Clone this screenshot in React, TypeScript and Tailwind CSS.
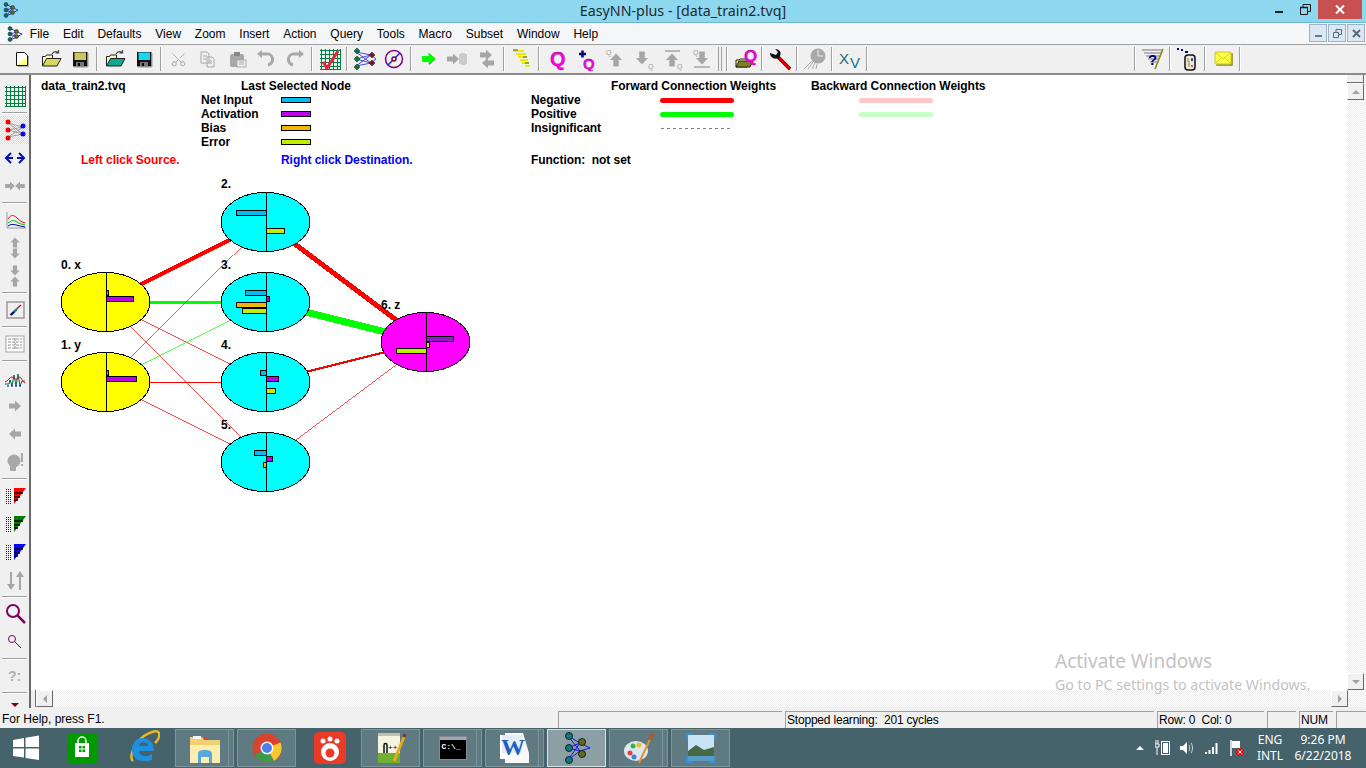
import type { ReactNode } from 'react';
import { Scissors } from 'lucide-react';

const bars = { input: '#00bcf0', act: '#c000f0', bias: '#f0b800', err: '#c0f000' };

const nodes = [
  { id: 0, cx: 105.5, cy: 302, fill: '#ffff00', label: '0. x', lx: 61, ly: 269 },
  { id: 1, cx: 105.5, cy: 382, fill: '#ffff00', label: '1. y', lx: 61, ly: 349 },
  { id: 2, cx: 265.5, cy: 222, fill: '#00ffff', label: '2.', lx: 221, ly: 188 },
  { id: 3, cx: 265.5, cy: 302, fill: '#00ffff', label: '3.', lx: 221, ly: 269 },
  { id: 4, cx: 265.5, cy: 382, fill: '#00ffff', label: '4.', lx: 221, ly: 349 },
  { id: 5, cx: 265.5, cy: 462, fill: '#00ffff', label: '5.', lx: 221, ly: 429 },
  { id: 6, cx: 425.5, cy: 342, fill: '#ff00ff', label: '6. z', lx: 381, ly: 309 },
];

const links = [
  [0, 2, '#ff0000', 4],
  [0, 3, '#00ff00', 3],
  [0, 4, '#ff0000', 0.7],
  [0, 5, '#ff0000', 0.7],
  [1, 2, '#ff0000', 0.7],
  [1, 3, '#00ff00', 0.7],
  [1, 4, '#ff0000', 1],
  [1, 5, '#ff0000', 0.7],
  [2, 6, '#ff0000', 5],
  [3, 6, '#00ff00', 7],
  [4, 6, '#ff0000', 2],
  [5, 6, '#ff0000', 0.7],
] as const;

// x, y, w, colour. Every bar is 6px high
const nodeBars: [number, number, number, string][] = [
  [236, 210, 30, bars.input],
  [266, 228, 18, bars.err],
  [245, 290, 21, bars.input],
  [266, 296, 3, bars.act],
  [236, 302, 30, bars.bias],
  [242, 308, 24, bars.err],
  [106, 290, 2, bars.input],
  [106, 296, 27, bars.act],
  [106, 370, 2, bars.input],
  [106, 376, 30, bars.act],
  [260, 370, 6, bars.input],
  [266, 376, 12, bars.act],
  [266, 388, 9, bars.err],
  [254, 450, 12, bars.input],
  [266, 456, 6, bars.act],
  [263, 462, 3, bars.bias],
  [426, 336, 27, '#9818d0'],
  [426, 342, 3, bars.err],
  [396, 348, 30, bars.err],
];

function Network() {
  return (
    <svg width={430} height={330} viewBox="50 170 430 330" className="ml-[19px] mt-[3px] block">
      <g shapeRendering="crispEdges">
        {links.map(([a, b, c, w]) => (
          <line key={`${a}-${b}`} x1={nodes[a].cx} y1={nodes[a].cy} x2={nodes[b].cx} y2={nodes[b].cy} stroke={c} strokeWidth={w} />
        ))}
        {nodes.map((n) => (
          <g key={n.id}>
            <ellipse cx={n.cx} cy={n.cy} rx={44.5} ry={29.5} fill={n.fill} stroke="#000" />
            <line x1={n.cx + 1} y1={n.cy - 30} x2={n.cx + 1} y2={n.cy + 30} stroke="#000" />
          </g>
        ))}
        {nodeBars.map(([x, y, w, c]) => (
          <rect key={`${x}-${y}`} x={x + 0.5} y={y + 0.5} width={w} height={5} fill={c} stroke="#000" />
        ))}
      </g>
      {nodes.map((n) => (
        <text key={n.id} x={n.lx} y={n.ly} fontFamily="Liberation Sans" fontWeight={700} fontSize={12} fill="#000">
          {n.label}
        </text>
      ))}
    </svg>
  );
}

function Ico({ children, w = 24, h = 24 }: { children: ReactNode; w?: number; h?: number }) {
  return (
    <svg width={w} height={h} viewBox={`0 0 ${w} ${h}`} className="block shrink-0">
      {children}
    </svg>
  );
}

function Arrow({ x, y, rot = 0, c = '#a6a6a6', s = 1 }: { x: number; y: number; rot?: number; c?: string; s?: number }) {
  return (
    <polygon
      points="-6,-2.5 0,-2.5 0,-5.5 6,0 0,5.5 0,2.5 -6,2.5"
      fill={c}
      transform={`translate(${x} ${y}) rotate(${rot}) scale(${s})`}
    />
  );
}

function Folder({ back, front, arrow = true }: { back: string; front: string; arrow?: boolean }) {
  return (
    <Ico>
      <path d="M3.500 19V9.500h3l1-1.500h6v3" fill={back} stroke="#222" />
      <path d="M3.500 19l4-7.500h14.500l-4 7.500z" fill={front} stroke="#222" />
      {arrow && <path d="M13 7c1.500-2.500 4-3 6-1.500M19.500 3v3h-3" fill="none" stroke="#444" strokeWidth={1.2} />}
    </Ico>
  );
}

function Floppy({ c }: { c: string }) {
  return (
    <Ico>
      <rect x={5} y={5} width={14.500} height={14.500} fill="#111" />
      <rect x={6.500} y={5.500} width={11.500} height={7.500} fill={c} />
      <rect x={8} y={15} width={8} height={4.500} fill="#777" />
      <rect x={10} y={16} width={2} height={3} fill="#000" />
      <path d="M20 6v14H6" fill="none" stroke="#9a9a9a" />
    </Ico>
  );
}

function Diamond({ x, y, c, r = 2.5 }: { x: number; y: number; c: string; r?: number }) {
  return <polygon points={`${x - r},${y} ${x},${y - r} ${x + r},${y} ${x},${y + r}`} fill={c} stroke="#123" strokeWidth={0.5} />;
}

function GridIco({ check }: { check?: boolean }) {
  const at = [3, 7, 11, 15, 19, 22];
  return (
    <Ico>
      <g stroke="#008040" strokeWidth={1} shapeRendering="crispEdges">
        {at.map((p) => (
          <line key={`v${p}`} x1={p} y1={2} x2={p} y2={22} />
        ))}
        {at.map((p) => (
          <line key={`h${p}`} x1={2} y1={p} x2={23} y2={p} />
        ))}
      </g>
      {check && <path d="M5 15l4 6 L20 4" fill="none" stroke="#f0203c" strokeWidth={3} />}
    </Ico>
  );
}

function NetSmall() {
  return (
    <Ico>
      <path d="M3 5l15 3M3 12l15-4M3 12l15 4M3 19l15-11M3 19l15-3M3 5l15 11" stroke="#2020e0" strokeWidth={0.8} fill="none" />
      <path d="M18 8l5 4M18 16l5-4" stroke="#2020e0" strokeWidth={0.8} />
      <Diamond x={4} y={4} c="#0a7a30" r={3} />
      <Diamond x={4} y={12} c="#0a7a30" r={3} />
      <Diamond x={4} y={20} c="#0a7a30" r={3} />
      <Diamond x={19} y={8} c="#801818" r={3} />
      <Diamond x={19} y={16} c="#801818" r={3} />
    </Ico>
  );
}

function Logo({ size = 16 }: { size?: number }) {
  return (
    <svg width={size} height={size} viewBox="0 0 16 16" className="block shrink-0">
      <path d="M3 2l7 4M3 8l7-2M3 8l7 3M3 14l7-8M3 14l7-3M10 6l5 2M10 11l5-3" stroke="#1818b0" strokeWidth={0.8} fill="none" />
      <circle cx={3} cy={2.500} r={2} fill="#0f6a6a" stroke="#123" strokeWidth={0.5} />
      <circle cx={3} cy={8} r={2} fill="#0f6a6a" stroke="#123" strokeWidth={0.5} />
      <circle cx={3} cy={13.500} r={2} fill="#0f6a6a" stroke="#123" strokeWidth={0.5} />
      <circle cx={9.500} cy={5.500} r={2} fill="#6a6a10" stroke="#123" strokeWidth={0.5} />
      <circle cx={9.500} cy={10.500} r={2} fill="#6a6a10" stroke="#123" strokeWidth={0.5} />
    </svg>
  );
}

function QLetter({ x, y, size = 19, c = '#ff00e0' }: { x: number; y: number; size?: number; c?: string }) {
  return (
    <text x={x} y={y} fontFamily="Liberation Sans" fontWeight={700} fontSize={size} fill={c} stroke="#700070" strokeWidth={0.3}>
      Q
    </text>
  );
}

function SmallQ({ x, y }: { x: number; y: number }) {
  return (
    <text x={x} y={y} fontFamily="Liberation Sans" fontSize={7} fill="#a0a0a0">
      Q
    </text>
  );
}

function Filter({ c, c2 }: { c: string; c2: string }) {
  return (
    <Ico>
      <g stroke="#1010a0" strokeWidth={1} strokeDasharray="1 1" shapeRendering="crispEdges">
        {[5, 7, 9, 11, 13, 15, 17, 19].map((y) => (
          <line key={y} x1={3} y1={y} x2={8} y2={y} />
        ))}
      </g>
      <polygon points="11,4 23,4 11,20" fill={c} />
      <path d="M11 9h9M11 13h6M11 16h4" stroke={c2} strokeWidth={1.5} />
    </Ico>
  );
}

function Mag({ big }: { big?: boolean }) {
  const r = big ? 6 : 3.500;
  const cx = big ? 10 : 9;
  const cy = 9;
  return (
    <Ico>
      <circle cx={cx} cy={cy} r={r} fill="none" stroke="#800060" strokeWidth={big ? 2 : 1} />
      <line x1={cx + r * 0.7} y1={cy + r * 0.7} x2={big ? 22 : 18} y2={big ? 21 : 18} stroke="#800060" strokeWidth={big ? 2.500 : 1} />
    </Ico>
  );
}

const topLeft: ReactNode[] = [
  <Ico><path d="M6.500 5.500h8l3 3v10h-11z" fill="#fff" stroke="#111" /><path d="M7.500 18l9-8v8z" fill="#ffff66" /><path d="M18.500 9v10.500H8" fill="none" stroke="#aaa" /></Ico>,
  <Folder back="#ffffc0" front="#d8d860" />,
  <Floppy c="#c8c860" />,
  null,
  <Folder back="#ffffc0" front="#10a890" />,
  <Floppy c="#18d8f0" />,
  null,
  <Scissors size={17} strokeWidth={1.4} className="-rotate-90 text-[#a9a9a9]" />,
  <Ico><path d="M5 5h6l2 2v9H5zM11 10h5l2 2v8h-7z" fill="#f0f0f0" stroke="#a8a8a8" /><path d="M7 9h4M7 12h3M13 14h3M13 16h3" stroke="#a8a8a8" /></Ico>,
  <Ico><rect x={5} y={7} width={14} height={13} rx={2} fill="#a8a8a8" /><rect x={9} y={5} width={6} height={4} fill="#888" /><rect x={12} y={13} width={9} height={7} fill="#f0f0f0" stroke="#a8a8a8" /><path d="M14 15h5M14 17h5" stroke="#a8a8a8" /></Ico>,
  <Ico><path d="M7 7h5a5.500 5.500 0 0 1 2 11" fill="none" stroke="#a8a8a8" strokeWidth={3} /><polygon points="3,7 8,3 8,11" fill="#a8a8a8" /></Ico>,
  <Ico><path d="M17 7h-5a5.500 5.500 0 0 0-2 11" fill="none" stroke="#a8a8a8" strokeWidth={3} /><polygon points="21,7 16,3 16,11" fill="#a8a8a8" /></Ico>,
  null,
  <GridIco check />,
  null,
  <NetSmall />,
  <Ico><circle cx={12} cy={12} r={8.500} fill="none" stroke="#800080" strokeWidth={1.5} /><path d="M6 18L18 6" stroke="#2020e0" strokeWidth={1.5} /><circle cx={12} cy={12} r={2} fill="#fff" stroke="#800040" strokeWidth={1.500} /></Ico>,
  null,
  <Ico><Arrow x={12} y={12} c="#00c000" s={1.1} /><Arrow x={11.500} y={11.500} c="#00ff00" s={1.05} /></Ico>,
  <Ico><Arrow x={7} y={12} /><path d="M14 7v10M16 6v12M18 6v12M20 7v10" stroke="#a6a6a6" /></Ico>,
  <Ico><Arrow x={11} y={8} /><Arrow x={13} y={16} rot={180} /></Ico>,
  null,
  <Ico><g stroke="#ecec00" strokeWidth={2} shapeRendering="crispEdges"><line x1={3} y1={4} x2={14} y2={4} /><line x1={6} y1={7} x2={16} y2={7} /><line x1={8} y1={10} x2={17} y2={10} /><line x1={10} y1={13} x2={18} y2={13} /><line x1={12} y1={16} x2={19} y2={16} /><line x1={15} y1={19} x2={20} y2={19} /></g><path d="M3 3h5M13 10h4M15 16h4" stroke="#555" /></Ico>,
  null,
  <Ico><QLetter x={5} y={19} size={20} /></Ico>,
  <Ico><path d="M5 7h7M8.500 3.500v7" stroke="#000080" strokeWidth={2.5} /><QLetter x={9} y={22} size={15} /></Ico>,
  <Ico><SmallQ x={3} y={8} /><Arrow x={13} y={13} rot={-90} s={1.1} /></Ico>,
  <Ico><Arrow x={10} y={11} rot={90} s={1.1} /><SmallQ x={16} y={22} /></Ico>,
  <Ico><path d="M4 4h15" stroke="#a6a6a6" strokeWidth={1.5} /><Arrow x={11} y={13} rot={-90} s={1.1} /><SmallQ x={16} y={22} /></Ico>,
  <Ico><SmallQ x={3} y={8} /><Arrow x={12} y={11} rot={90} s={1.1} /><path d="M4 20h16" stroke="#a6a6a6" strokeWidth={1.5} /></Ico>,
];

const topRight: ReactNode[] = [
  <Ico><path d="M3 13h3l1-1h7v8H3z" fill="#ffff80" stroke="#222" /><path d="M3 20l3-6h14l-3 6z" fill="#808020" stroke="#222" /><QLetter x={11} y={15} size={17} /></Ico>,
  null,
  <Ico><path d="M9 9l13 13" stroke="#111" strokeWidth={3.500} /><path d="M11 11l11 11" stroke="#e80000" strokeWidth={2.500} /><path d="M2 6c0 4 4 7 8 5l2-2c2-4-1-7-5-7l3 3-2 3-3-1z" fill="#111" /></Ico>,
  null,
  <Ico><circle cx={15} cy={9} r={7.500} fill="#a8a8a8" /><path d="M15 3v6h5" stroke="#f0f0f0" fill="none" /><path d="M9 14L1 22M10 15l-5 7M12 16l-3 6M14 17l-1 5" stroke="#a8a8a8" fill="none" /></Ico>,
  null,
  <Ico>
    <text x={1} y={17} fontFamily="Liberation Sans" fontSize={15} fill="#0f7080">X</text>
    <text x={12} y={21} fontFamily="Liberation Sans" fontSize={15} fill="#0f7090">V</text>
  </Ico>,
];

const topFar: ReactNode[] = [
  <Ico><path d="M1 3h21M3 6h17M5 9h14M7 12h11M9 15h7" stroke="#a0a0a0" strokeWidth={1.500} /><path d="M22 2L14 22" stroke="#8a8a00" strokeWidth={1.5} /><text x={7} y={18} fontFamily="Liberation Sans" fontWeight={700} fontSize={15} fill="#000080">?</text></Ico>,
  null,
  <Ico><path d="M1 2h2M5 3h2M9 5h3" stroke="#000080" strokeWidth={2} /><rect x={9} y={8} width={10} height={15} rx={3} fill="#e8e8e0" stroke="#111" strokeWidth={1.5} /><path d="M12 11v4h2M14 17h-2M13 17v3" stroke="#a09000" fill="none" /><path d="M16 11v3M15 13h2" stroke="#000080" /><circle cx={16} cy={19} r={1} fill="#c02040" /></Ico>,
  null,
  <Ico><rect x={5} y={6} width={17} height={13} rx={1} fill="#a0a040" /><rect x={4} y={5} width={16} height={12} rx={1} fill="#ffff40" stroke="#c8c830" /><path d="M4 5l8 7 8-7M4 17l6-6M20 17l-6-6" stroke="#d0d040" fill="none" /></Ico>,
];

const side: ReactNode[] = [
  <GridIco />,
  null,
  <div className="flex h-full w-full items-center justify-center bg-[repeating-conic-gradient(#d8d8d8_0_25%,#fff_0_50%)] bg-[length:2px_2px]">
    <Ico w={26} h={24}>
      <path d="M6 5l15 4M6 5l15 11M6 12l15-3M6 12l15 4M6 19l15-10M6 19l15-3" stroke="#a0a0a0" />
      <circle cx={6} cy={4} r={2.500} fill="#f00000" />
      <circle cx={6} cy={12} r={2.500} fill="#f00000" />
      <circle cx={6} cy={20} r={2.500} fill="#f00000" />
      <circle cx={21} cy={8} r={2.500} fill="#0000f0" />
      <circle cx={21} cy={16} r={2.500} fill="#0000f0" />
    </Ico>
  </div>,
  <Ico><path d="M8 7l-5 5 5 5M3 12h7M16 7l5 5-5 5M14 12h7" fill="none" stroke="#0010c0" strokeWidth={2} /></Ico>,
  <Ico><Arrow x={7} y={12} s={0.8} /><Arrow x={17} y={12} rot={180} s={0.8} /></Ico>,
  null,
  <Ico><path d="M4 4v16h19" fill="none" stroke="#999" /><path d="M5 11c3-5 6-4 9-1s5 4 8 5" fill="none" stroke="#f00000" /><path d="M5 15c4-3 6-3 9-1s5 2 8 3" fill="none" stroke="#00c000" /><path d="M5 18c3-2 5-2 8-1s6 1 9 2" fill="none" stroke="#0000c0" /></Ico>,
  <Ico><Arrow x={12} y={6.500} rot={-90} s={0.85} /><Arrow x={12} y={17.500} rot={90} s={0.85} /></Ico>,
  <Ico><Arrow x={12} y={6.500} rot={90} s={0.85} /><Arrow x={12} y={17.500} rot={-90} s={0.85} /></Ico>,
  null,
  <Ico><rect x={4} y={4} width={17} height={16} fill="none" stroke="#999" strokeWidth={1.500} /><path d="M7 17L18 7" stroke="#c02040" strokeWidth={1.500} /><path d="M8 17l5-5" stroke="#0000a0" strokeWidth={2} /><path d="M11 14l3-3" stroke="#00a060" strokeWidth={2} /></Ico>,
  null,
  <Ico><rect x={3} y={4} width={18} height={16} fill="#fff" stroke="#a0a0a0" /><path d="M5 7h14M5 10h14M5 13h14M5 16h14M12 6v12" stroke="#909090" strokeDasharray="3 1" /></Ico>,
  null,
  <Ico><path d="M2 18h4l1-4 2 6 2-11 2 11 2-12 2 12 2-5h3" fill="none" stroke="#00704a" /><path d="M2 16c3-1 5-5 7-5s3 3 5 2 3-3 4-1 2 4 4 5" fill="none" stroke="#e00030" /><path d="M4 20h16" stroke="#0000c0" strokeDasharray="2 2" /></Ico>,
  <Ico><Arrow x={12} y={12} /></Ico>,
  <Ico><Arrow x={12} y={12} rot={180} /></Ico>,
  <Ico><circle cx={11} cy={11} r={6.500} fill="#a8a8a8" /><path d="M7 16h6v5H7z" fill="#a8a8a8" /><path d="M19 3v9M19 14v2" stroke="#a8a8a8" strokeWidth={2} /></Ico>,
  null,
  <Filter c="#ff0000" c2="#000" />,
  <Filter c="#008000" c2="#000" />,
  <Filter c="#0000ff" c2="#000" />,
  <Ico><path d="M8 4v14" stroke="#a6a6a6" strokeWidth={2} /><polygon points="4,16 12,16 8,22" fill="#a6a6a6" /><path d="M17 8v14" stroke="#a6a6a6" strokeWidth={2} /><polygon points="13,9 21,9 17,3" fill="#a6a6a6" /></Ico>,
  null,
  <Mag big />,
  <Mag />,
  null,
  <Ico><text x={5} y={17} fontFamily="Liberation Sans" fontWeight={700} fontSize={14} fill="#b0b0b0">?:</text></Ico>,
  null,
  <div className="flex h-full items-start justify-center pt-[6px]"><Ico w={12} h={5}><polygon points="2,1 10,1 6,5" fill="#800010" /></Ico></div>,
];

function ToolStrip({ items }: { items: ReactNode[] }) {
  return (
    <>
      {items.map((it, i) =>
        it === null ? (
          <div key={i} className="mx-[2px] h-[24px] w-[2px] shrink-0 border-l border-r border-l-[#a0a0a0] border-r-white" />
        ) : (
          <div key={i} className="flex h-[28px] w-[29px] shrink-0 items-center justify-center">
            {it}
          </div>
        ),
      )}
    </>
  );
}

function SideStrip() {
  return (
    <div className="flex h-full w-[31px] shrink-0 flex-col overflow-hidden border-r-2 border-[#696969] bg-[#f0f0f0] pt-[7px]">
      {side.map((it, i) =>
        it === null ? (
          <div key={i} className="flex h-[6px] shrink-0 items-center px-[2px]">
            <div className="h-[2px] w-full border-t border-b border-t-[#a0a0a0] border-b-white" />
          </div>
        ) : (
          <div key={i} className="flex h-[28px] shrink-0 items-center justify-center [&>div]:w-full">
            {it}
          </div>
        ),
      )}
    </div>
  );
}

function Legend() {
  const cell = 'whitespace-nowrap leading-[14px]';
  const swatch = 'col-start-5 h-[6px] w-[30px] border border-black -mt-px self-center';
  const bar = 'h-[5px] w-[74px] rounded-full self-center';
  return (
    <div className="grid grid-cols-[40px_120px_40px_40px_250px_80px_49px_151px_48px_1fr] grid-rows-[14px_14px_14px_14px_14px_4px_14px] pl-[10px] pt-[4px] font-['Liberation_Sans',sans-serif] text-[12px] font-bold tracking-[-0.05px] text-black">
      <div className={`${cell} col-start-1 row-start-1`}>data_train2.tvq</div>
      <div className={`${cell} col-start-4 row-start-1`}>Last Selected Node</div>
      <div className={`${cell} col-start-7 row-start-1`}>Forward Connection Weights</div>
      <div className={`${cell} col-start-9 row-start-1`}>Backward Connection Weights</div>

      <div className={`${cell} col-start-3 row-start-2`}>Net Input</div>
      <div className={`${cell} col-start-3 row-start-3`}>Activation</div>
      <div className={`${cell} col-start-3 row-start-4`}>Bias</div>
      <div className={`${cell} col-start-3 row-start-5`}>Error</div>
      <div className={`${swatch} row-start-2 bg-[#00bcf0]`} />
      <div className={`${swatch} row-start-3 bg-[#c000f0]`} />
      <div className={`${swatch} row-start-4 bg-[#f0b800]`} />
      <div className={`${swatch} row-start-5 bg-[#c0f000]`} />

      <div className={`${cell} col-start-6 row-start-2`}>Negative</div>
      <div className={`${cell} col-start-6 row-start-3`}>Positive</div>
      <div className={`${cell} col-start-6 row-start-4`}>Insignificant</div>
      <div className={`${bar} col-start-8 row-start-2 bg-[#ff0000]`} />
      <div className={`${bar} col-start-8 row-start-3 bg-[#00ff00]`} />
      <div className="col-start-8 row-start-4 ml-[1px] h-px w-[70px] self-center bg-[repeating-linear-gradient(90deg,#808080_0_3px,transparent_3px_6px)]" />
      <div className={`${bar} col-start-10 row-start-2 bg-[#ffc8c8]`} />
      <div className={`${bar} col-start-10 row-start-3 bg-[#c8ffc8]`} />

      <div className={`${cell} col-start-2 row-start-7 text-[#ff0000]`}>Left click Source.</div>
      <div className={`${cell} col-start-5 row-start-7 text-[#0000ff]`}>Right click Destination.</div>
      <div className={`${cell} col-start-6 row-start-7`}>Function:&nbsp;&nbsp;not set</div>
    </div>
  );
}

function ScrollBtn({ rot }: { rot: string }) {
  return (
    <div className="flex h-[17px] w-[17px] shrink-0 items-center justify-center border border-b-[#696969] border-l-white border-r-[#696969] border-t-white bg-[#f0f0f0]">
      <div className={`h-0 w-0 border-x-[4px] border-b-[4px] border-x-transparent border-b-[#a0a0a0] ${rot}`} />
    </div>
  );
}

const dither = 'bg-[repeating-conic-gradient(#ececec_0_25%,#fff_0_50%)] bg-[length:2px_2px]';

function TaskBtn({ children, stacked, active }: { children: ReactNode; stacked?: boolean; active?: boolean }) {
  return (
    <div className="flex h-full w-[62px] shrink-0 items-center pr-[3px]">
      <div className={`relative flex h-[38px] w-[59px] items-center justify-center border ${active ? 'border-[#d8e2e4] bg-[#8b9fa4]' : 'border-[#7d959c] bg-[#5f7a81]'}`}>
        {children}
        {stacked && <div className="absolute bottom-0 right-[4px] top-0 w-px bg-[#7d959c]" />}
      </div>
    </div>
  );
}

function TaskPlain({ children }: { children: ReactNode }) {
  return <div className="flex h-full w-[62px] shrink-0 items-center justify-center">{children}</div>;
}

function TaskBar() {
  return (
    <div className="flex h-[40px] shrink-0 items-center bg-[#46626b]">
      <div className="flex h-full w-[51px] shrink-0 items-center justify-center">
        <svg width={28} height={28} viewBox="0 0 28 28">
          <path d="M1 6l11-2v9H1zM13.500 3.800L27 1.500V13H13.500zM1 14.500h11v9L1 22zM13.500 14.500H27V26l-13.500-2z" fill="#fff" />
        </svg>
      </div>
      <TaskPlain>
        <svg width={30} height={30} viewBox="0 0 30 30">
          <rect width={30} height={30} fill="#009a00" />
          <path d="M11 10V8a4 4 0 0 1 8 0v2" fill="none" stroke="#fff" strokeWidth={1.5} />
          <path d="M8 10h14v14H8z" fill="#fff" />
          <path d="M12 13h2.500v2.500H12zM15.500 13H18v2.500h-2.500zM12 16.500h2.500V19H12zM15.500 16.500H18V19h-2.500z" fill="#009a00" />
        </svg>
      </TaskPlain>
      <TaskPlain>
        <svg width={32} height={36} viewBox="0 0 32 36">
          <path d="M5 31C1 28 5 14 16 6c7-5 14-6 15-3s-1 7-4 10" fill="none" stroke="#e8b828" strokeWidth={2.500} />
          <path d="M4 20c0-8 5-12 11-12s11 5 11 13H11c0 5 7 7 13 3v6c-9 3-20 1-20-10zm7-4h9c0-5-9-5-9 0z" fill="#1e90e0" />
        </svg>
      </TaskPlain>
      <TaskBtn stacked>
        <svg width={34} height={34} viewBox="0 0 34 34">
          <path d="M2 6h12l2 3h16v23H2z" fill="#f0d070" />
          <rect x={5} y={5} width={8} height={3} fill="#f8f8f0" />
          <rect x={16} y={6} width={4} height={2} fill="#e04030" />
          <path d="M2 14h30v18H2z" fill="#fdeeb0" />
          <path d="M10 32V23c0-3 2-4 7-4s7 1 7 4v9h-3v-6h-8v6z" fill="#5aa8d8" />
        </svg>
      </TaskBtn>
      <TaskBtn>
        <svg width={30} height={30} viewBox="0 0 30 30">
          <circle cx={15} cy={15} r={14.500} fill="#d8442e" />
          <path d="M15 15L2.500 22A14.500 14.500 0 0 0 22 27.700z" fill="#3a9c48" />
          <path d="M15 15L22 27.700A14.500 14.500 0 0 0 28.500 9.500z" fill="#f8c830" />
          <circle cx={15} cy={15} r={6.500} fill="#fff" />
          <circle cx={15} cy={15} r={5} fill="#4a80e8" />
        </svg>
      </TaskBtn>
      <TaskPlain>
        <svg width={32} height={32} viewBox="0 0 32 32">
          <rect width={32} height={32} rx={5} fill="#ec3a28" />
          <circle cx={16} cy={20} r={9} fill="#fff" />
          <circle cx={16} cy={21} r={4.500} fill="#ec3a28" />
          <circle cx={9} cy={9} r={2.500} fill="#fff" />
          <circle cx={16} cy={7} r={2.500} fill="#fff" />
          <circle cx={23} cy={9} r={2.500} fill="#fff" />
        </svg>
      </TaskPlain>
      <TaskBtn>
        <svg width={34} height={34} viewBox="0 0 34 34">
          <path d="M4 2h22v30H4z" fill="#f4f4e0" />
          <path d="M4 22h22v10H4z" fill="#70b030" />
          <path d="M4 2h22v3H4z" fill="#c0c0b0" />
          <path d="M10 22v-8a1.500 1.500 0 0 1 3 0v8" fill="none" stroke="#111" strokeWidth={1.5} />
          <text x={14} y={19} fontFamily="Liberation Sans" fontSize={8} fill="#111">++</text>
          <path d="M20 30l10-24" stroke="#e8a820" strokeWidth={3} />
          <path d="M30 6l1-3" stroke="#803030" strokeWidth={3} />
        </svg>
      </TaskBtn>
      <TaskBtn stacked>
        <div className="flex h-[24px] w-[28px] flex-col border border-[#889] bg-black">
          <div className="h-[3px] bg-[#9aa]" />
          <span className="pl-[2px] font-['Liberation_Mono',monospace] text-[8px] font-bold leading-[14px] text-white">C:\_</span>
        </div>
      </TaskBtn>
      <TaskBtn stacked>
        <svg width={32} height={32} viewBox="0 0 32 32">
          <path d="M6 1h18l6 20v10H6z" fill="#f8f8f8" />
          <path d="M1 3h22v24H1z" fill="#ffffff" />
          <path d="M3 3h20v18H3z" fill="#1f5fbf" opacity={0.12} />
          <text x={2} y={23} fontFamily="Liberation Serif" fontWeight={700} fontSize={24} fill="#1f5fbf">W</text>
        </svg>
      </TaskBtn>
      <TaskBtn active>
        <svg width={34} height={34} viewBox="0 0 34 34">
          <path d="M8 5l12 7M8 5l12 15M8 17l12-5M8 17l12 3M8 29l12-17M8 29l12-9M20 12l10 5M20 20l10-3" stroke="#1818e0" fill="none" />
          <circle cx={9} cy={5} r={3.500} fill="#0f7a7a" stroke="#123" />
          <circle cx={9} cy={17} r={3.500} fill="#0f7a7a" stroke="#123" />
          <circle cx={9} cy={29} r={3.500} fill="#0f7a7a" stroke="#123" />
          <circle cx={22} cy={11} r={3.500} fill="#6a6a10" stroke="#123" />
          <circle cx={22} cy={23} r={3.500} fill="#6a6a10" stroke="#123" />
        </svg>
      </TaskBtn>
      <TaskBtn stacked>
        <svg width={32} height={34} viewBox="0 0 32 34">
          <ellipse cx={13} cy={20} rx={12} ry={10} fill="#dce8f0" />
          <circle cx={7} cy={22} r={2.500} fill="#e04040" />
          <circle cx={10} cy={15} r={2.500} fill="#40b040" />
          <circle cx={16} cy={14} r={2.500} fill="#e8c030" />
          <circle cx={11} cy={26} r={2.500} fill="#4080e0" />
          <path d="M16 32L28 6" stroke="#e89030" strokeWidth={2} />
          <path d="M27 9l3-7" stroke="#a06030" strokeWidth={4} />
        </svg>
      </TaskBtn>
      <TaskBtn>
        <svg width={32} height={32} viewBox="0 0 32 32">
          <rect x={3} y={3} width={26} height={26} fill="#c8e4f4" />
          <path d="M3 19l8-6 8 5 10-3v14H3z" fill="#486848" />
          <path d="M3 24h26v5H3z" fill="#5a9ac8" />
          <path d="M2 8V2h6M24 2h6v6M30 24v6h-6M8 30H2v-6" fill="none" stroke="#3a8ed8" strokeWidth={2} />
        </svg>
      </TaskBtn>
      <div className="ml-auto flex h-full items-center font-['Noto_Sans',sans-serif] text-[12px] text-white">
        <div className="mr-[7px] h-0 w-0 border-x-[4px] border-b-[4px] border-x-transparent border-b-white" />
        <div className="flex w-[24px] justify-center">
          <svg width={16} height={18} viewBox="0 0 16 18">
            <path d="M1 1v4M3 1v4M0 5h4v3H0zM2 8v8" stroke="#fff" fill="none" />
            <rect x={6.500} y={2.500} width={8} height={13} fill="none" stroke="#fff" />
            <rect x={8} y={4} width={5} height={10} fill="#fff" />
          </svg>
        </div>
        <div className="flex w-[24px] justify-center">
          <svg width={16} height={16} viewBox="0 0 16 16">
            <path d="M1 6h3l4-4v12l-4-4H1z" fill="#fff" />
            <path d="M10 5c1 2 1 4 0 6M12 3c2 3 2 7 0 10" stroke="#cdd" fill="none" />
          </svg>
        </div>
        <div className="flex w-[26px] justify-center">
          <svg width={16} height={14} viewBox="0 0 16 14">
            <path d="M1 11h2v2H1zM4.500 9h2v4h-2zM8 6h2v7H8zM11.500 2h2v11h-2z" fill="#fff" />
          </svg>
        </div>
        <div className="flex w-[24px] justify-center">
          <svg width={16} height={18} viewBox="0 0 16 18">
            <path d="M2 1v16" stroke="#fff" strokeWidth={1.5} />
            <path d="M3 2h8v7H3z" fill="#fff" />
            <circle cx={11} cy={13} r={4} fill="#e02020" />
            <path d="M9.500 11.500l3 3M12.500 11.500l-3 3" stroke="#fff" />
          </svg>
        </div>
        <div className="ml-[7px] flex w-[28px] flex-col items-center leading-[16px]">
          <span>ENG</span>
          <span>INTL</span>
        </div>
        <div className="flex w-[82px] flex-col items-center pr-[4px] leading-[16px]">
          <span>9:26 PM</span>
          <span>6/22/2018</span>
        </div>
      </div>
    </div>
  );
}

export default function App() {
  const menus = ['File', 'Edit', 'Defaults', 'View', 'Zoom', 'Insert', 'Action', 'Query', 'Tools', 'Macro', 'Subset', 'Window', 'Help'];
  const panel = 'h-full shrink-0 border-l border-t border-[#a0a0a0] pl-px leading-[16px] tracking-[-0.2px]';

  return (
    <div className="flex h-[768px] w-[1366px] flex-col overflow-hidden bg-[#f0f0f0] font-['Liberation_Sans',sans-serif] text-[12px] text-black">
      {/* title bar */}
      <div className="relative flex h-[23px] shrink-0 items-center justify-center border-b border-[#6cb8d0] bg-[#8ed8ef]">
        <div className="absolute left-[3px] top-[2px]">
          <Logo size={16} />
        </div>
        <span className="font-['Noto_Sans',sans-serif] text-[14.25px] leading-[22px] text-[#1b2b33]">EasyNN-plus - [data_train2.tvq]</span>
        <div className="absolute right-[4px] top-0 flex h-[19px] items-start">
          <div className="flex h-[19px] w-[26px] items-center justify-center">
            <div className="mt-[4px] h-[2px] w-[8px] bg-[#1b1b1b]" />
          </div>
          <div className="flex h-[19px] w-[26px] items-center justify-center">
            <svg width={11} height={11} viewBox="0 0 11 11">
              <path d="M0.500 3.500h7v7h-7zM3 3V0.500h7.500v7H8" fill="none" stroke="#1b1b1b" />
              <path d="M0 3.500h8" stroke="#1b1b1b" strokeWidth={1.500} />
            </svg>
          </div>
          <div className="flex h-[19px] w-[44px] items-center justify-center bg-[#c75050]">
            <svg width={10} height={9} viewBox="0 0 10 9">
              <path d="M1 0.500l8 8M9 0.500l-8 8" stroke="#fff" strokeWidth={2} />
            </svg>
          </div>
        </div>
      </div>

      {/* menu bar */}
      <div className="relative flex h-[21px] shrink-0 items-center gap-[13.8px] bg-[#f5f6f7] pl-[7px]">
        <div className="mr-[-7px]">
          <Logo size={16} />
        </div>
        {menus.map((m) => (
          <span key={m} className="leading-[20px]">
            {m}
          </span>
        ))}
        <div className="absolute right-[1px] top-[1px] flex gap-px">
          {[
            <div key="min" className="mt-[5px] h-[2px] w-[7px] bg-[#6a7a88]" />,
            <svg key="res" width={9} height={9} viewBox="0 0 9 9"><path d="M0.500 3.500h5v5h-5zM3 3V0.500h5.500v5H6" fill="none" stroke="#5a6a78" /></svg>,
            <svg key="cl" width={9} height={9} viewBox="0 0 9 9"><path d="M1 1l7 7M8 1l-7 7" stroke="#5a6a78" strokeWidth={2} /></svg>,
          ].map((g, i) => (
            <div key={i} className="flex h-[18px] w-[18px] items-center justify-center border border-[#9db4c8] bg-[#dbe7f3]">
              {g}
            </div>
          ))}
        </div>
      </div>

      {/* main toolbar */}
      <div className="flex h-[31px] shrink-0 items-center border-b-2 border-t border-b-[#8c8c8c] border-t-[#a0a0a0] bg-[#f0f0f0] pl-[7px] pr-[123px]">
        <ToolStrip items={topLeft} />
        <div className="mx-[2px] h-[24px] w-[4px] shrink-0 border-l border-r border-l-[#a0a0a0] border-r-[#a0a0a0]" />
        <ToolStrip items={[null, ...topRight, null]} />
        <div className="ml-auto flex items-center">
          <ToolStrip items={[null, ...topFar, null]} />
        </div>
      </div>

      {/* work area */}
      <div className="flex min-h-0 flex-1">
        <SideStrip />
        <div className="flex min-w-0 flex-1 flex-col bg-white">
          <div className="flex min-h-0 flex-1">
            <div className="relative min-w-0 flex-1">
              <Legend />
              <Network />
              <div className="absolute bottom-[-5px] right-[37px] z-10 w-[255px] font-['Noto_Sans',sans-serif] text-[#c3c3c3]">
                <div className="text-[19px] leading-[27px]">Activate Windows</div>
                <div className="whitespace-nowrap text-[14.2px] leading-[20px]">Go to PC settings to activate Windows.</div>
              </div>
            </div>
            <div className={`flex w-[19px] shrink-0 flex-col pr-[2px] ${dither}`}>
              <div className="h-[8px] shrink-0 border-b border-r border-[#696969] bg-[#f0f0f0]" />
              <ScrollBtn rot="" />
              <div className="flex-1" />
              <ScrollBtn rot="rotate-180" />
            </div>
          </div>
          <div className={`flex h-[17px] shrink-0 pr-[18px] ${dither}`}>
            <div className="w-[5px] shrink-0 border-r border-[#696969] bg-[#f0f0f0]" />
            <ScrollBtn rot="-rotate-90" />
            <div className="flex-1" />
            <ScrollBtn rot="rotate-90" />
          </div>
          <div className="h-px shrink-0 bg-[#f0f0f0]" />
        </div>
      </div>

      {/* status bar */}
      <div className="flex h-[20px] shrink-0 gap-[3px] bg-[#f0f0f0] pt-[3px] whitespace-nowrap">
        <div className="w-[555px] shrink-0 pl-[2px] leading-[16px]">For Help, press F1.</div>
        <div className={`${panel} w-[224px]`} />
        <div className={`${panel} w-[369px]`}>Stopped learning:&nbsp;&nbsp;201 cycles</div>
        <div className={`${panel} w-[107px]`}>Row: 0&nbsp;&nbsp;Col: 0</div>
        <div className={`${panel} w-[29px]`} />
        <div className={`${panel} w-[34px]`}>NUM</div>
        <div className={`${panel} flex-1`} />
      </div>

      <TaskBar />
    </div>
  );
}
